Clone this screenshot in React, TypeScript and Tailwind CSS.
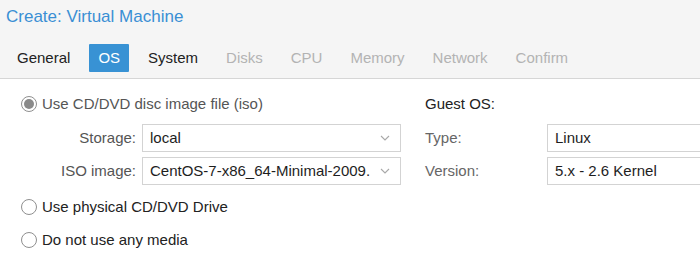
import React from "react";

const Chevron = () => (
  <svg width="10" height="6" viewBox="0 0 10 6" className="shrink-0">
    <path d="M1 1 L5 5 L9 1" fill="none" stroke="#a8a8a8" strokeWidth="1.1" />
  </svg>
);

const Radio = ({ checked }: { checked?: boolean }) => (
  <span className="w-[16px] h-[16px] rounded-full border border-[#8f8f8f] flex items-center justify-center shrink-0 bg-white">
    {checked && <span className="w-[10px] h-[10px] rounded-full bg-[#8a8a8a]" />}
  </span>
);

const Field = ({ value, width, chevron }: { value: string; width: string; chevron?: boolean }) => (
  <div className={`${width} shrink-0 h-[28px] border border-[#d3d3d3] bg-white flex items-center pl-[7px] pr-[10px] text-[15px] text-[#1e1e1e] overflow-hidden`}>
    <span className="flex-1 whitespace-nowrap overflow-hidden">{value}</span>
    {chevron && <Chevron />}
  </div>
);

const tabs = [
  { t: "General", s: "on" },
  { t: "OS", s: "active" },
  { t: "System", s: "on" },
  { t: "Disks", s: "off" },
  { t: "CPU", s: "off" },
  { t: "Memory", s: "off" },
  { t: "Network", s: "off" },
  { t: "Confirm", s: "off" },
];

export default function App() {
  return (
    <div className="w-[700px] h-[253px] bg-white overflow-hidden" style={{ fontFamily: '"Liberation Sans", Arial, sans-serif' }}>
      <div className="h-[79px] bg-[#f5f5f5] border-b border-[#d6d6d6] flex flex-col">
        <div className="pl-[6px] pt-[6px] h-[44px] text-[17px] leading-[22px] text-[#3a8fd4]">Create: Virtual Machine</div>
        <div className="flex gap-[10px] pl-[8px]">
          {tabs.map((x) => (
            <div
              key={x.t}
              className={
                x.s === "active"
                  ? "h-[28px] px-[9px] flex items-center text-[15px] bg-[#3892d4] text-white rounded-[1px]"
                  : x.s === "on"
                  ? "h-[28px] px-[9px] flex items-center text-[15px] text-[#222]"
                  : "h-[28px] px-[9px] flex items-center text-[15px] text-[#b3b3b3]"
              }
            >
              {x.t}
            </div>
          ))}
        </div>
      </div>
      <div className="flex">
        <div className="w-[425px] shrink-0 flex flex-col pl-[21px] pt-[11px]">
          <div className="h-[28px] flex items-center gap-[5px] text-[15px] text-[#555]">
            <Radio checked />
            <span>Use CD/DVD disc image file (iso)</span>
          </div>
          <div className="mt-[6px] flex items-center">
            <div className="w-[121px] shrink-0 text-right text-[15px] text-[#555] pr-[6px]">Storage:</div>
            <Field value="local" width="w-[259px]" chevron />
          </div>
          <div className="mt-[5px] flex items-center">
            <div className="w-[121px] shrink-0 text-right text-[15px] text-[#555] pr-[6px]">ISO image:</div>
            <Field value="CentOS-7-x86_64-Minimal-2009." width="w-[259px]" chevron />
          </div>
          <div className="mt-[8px] h-[28px] flex items-center gap-[5px] text-[15px] text-[#222]">
            <Radio />
            <span>Use physical CD/DVD Drive</span>
          </div>
          <div className="mt-[5px] h-[28px] flex items-center gap-[5px] text-[15px] text-[#222]">
            <Radio />
            <span>Do not use any media</span>
          </div>
        </div>
        <div className="flex-1 min-w-0 flex flex-col pt-[11px]">
          <div className="h-[28px] flex items-center text-[15px] text-[#222]">Guest OS:</div>
          <div className="mt-[6px] flex items-center">
            <div className="w-[122px] shrink-0 text-[15px] text-[#666]">Type:</div>
            <Field value="Linux" width="w-[170px]" />
          </div>
          <div className="mt-[5px] flex items-center">
            <div className="w-[122px] shrink-0 text-[15px] text-[#666]">Version:</div>
            <Field value="5.x - 2.6 Kernel" width="w-[170px]" />
          </div>
        </div>
      </div>
    </div>
  );
}
